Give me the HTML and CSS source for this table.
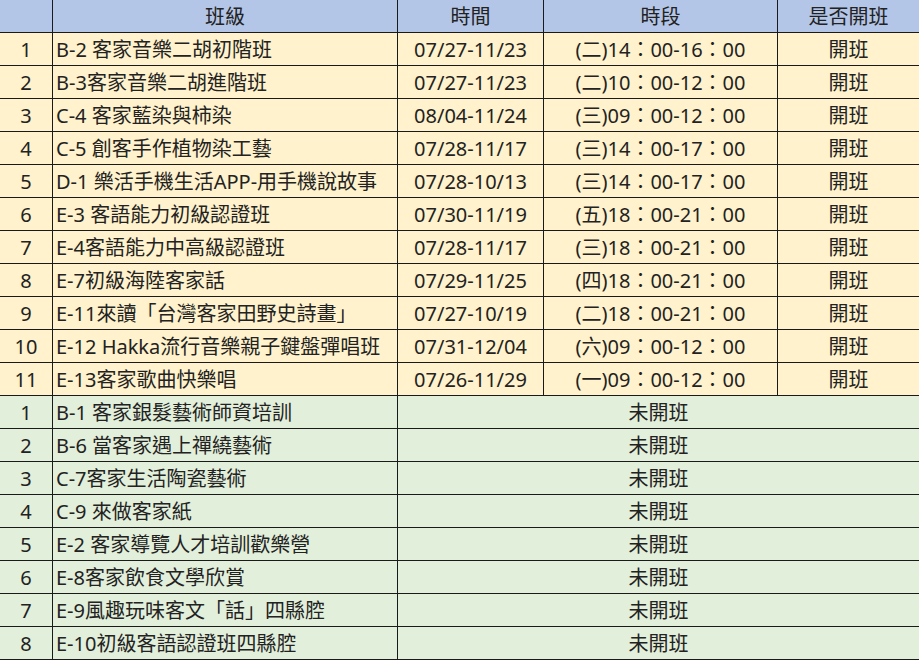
FILE: index.html
```html
<!DOCTYPE html>
<html lang="zh-Hant">
<head>
<meta charset="utf-8">
<title>班級開班一覽</title>
<link rel="stylesheet" href="styles.css">
</head>
<body>
<div class="sheet">
  <div class="c hd"></div><div class="c hd">班級</div><div class="c hd">時間</div><div class="c hd">時段</div><div class="c hd last">是否開班</div>

  <div class="c op">1</div><div class="c op l">B-2 客家音樂二胡初階班</div><div class="c op">07/27-11/23</div><div class="c op">(二)14：00-16：00</div><div class="c op last">開班</div>
  <div class="c op">2</div><div class="c op l">B-3客家音樂二胡進階班</div><div class="c op">07/27-11/23</div><div class="c op">(二)10：00-12：00</div><div class="c op last">開班</div>
  <div class="c op">3</div><div class="c op l">C-4 客家藍染與柿染</div><div class="c op">08/04-11/24</div><div class="c op">(三)09：00-12：00</div><div class="c op last">開班</div>
  <div class="c op">4</div><div class="c op l">C-5 創客手作植物染工藝</div><div class="c op">07/28-11/17</div><div class="c op">(三)14：00-17：00</div><div class="c op last">開班</div>
  <div class="c op">5</div><div class="c op l">D-1 樂活手機生活APP-用手機說故事</div><div class="c op">07/28-10/13</div><div class="c op">(三)14：00-17：00</div><div class="c op last">開班</div>
  <div class="c op">6</div><div class="c op l">E-3 客語能力初級認證班</div><div class="c op">07/30-11/19</div><div class="c op">(五)18：00-21：00</div><div class="c op last">開班</div>
  <div class="c op">7</div><div class="c op l">E-4客語能力中高級認證班</div><div class="c op">07/28-11/17</div><div class="c op">(三)18：00-21：00</div><div class="c op last">開班</div>
  <div class="c op">8</div><div class="c op l">E-7初級海陸客家話</div><div class="c op">07/29-11/25</div><div class="c op">(四)18：00-21：00</div><div class="c op last">開班</div>
  <div class="c op">9</div><div class="c op l">E-11來讀「台灣客家田野史詩畫」</div><div class="c op">07/27-10/19</div><div class="c op">(二)18：00-21：00</div><div class="c op last">開班</div>
  <div class="c op">10</div><div class="c op l">E-12 Hakka流行音樂親子鍵盤彈唱班</div><div class="c op">07/31-12/04</div><div class="c op">(六)09：00-12：00</div><div class="c op last">開班</div>
  <div class="c op">11</div><div class="c op l">E-13客家歌曲快樂唱</div><div class="c op">07/26-11/29</div><div class="c op">(一)09：00-12：00</div><div class="c op last">開班</div>

  <div class="c no">1</div><div class="c no l">B-1 客家銀髮藝術師資培訓</div><div class="c no span last">未開班</div>
  <div class="c no">2</div><div class="c no l">B-6 當客家遇上禪繞藝術</div><div class="c no span last">未開班</div>
  <div class="c no">3</div><div class="c no l">C-7客家生活陶瓷藝術</div><div class="c no span last">未開班</div>
  <div class="c no">4</div><div class="c no l">C-9 來做客家紙</div><div class="c no span last">未開班</div>
  <div class="c no">5</div><div class="c no l">E-2 客家導覽人才培訓歡樂營</div><div class="c no span last">未開班</div>
  <div class="c no">6</div><div class="c no l">E-8客家飲食文學欣賞</div><div class="c no span last">未開班</div>
  <div class="c no">7</div><div class="c no l">E-9風趣玩味客文「話」四縣腔</div><div class="c no span last">未開班</div>
  <div class="c no">8</div><div class="c no l">E-10初級客語認證班四縣腔</div><div class="c no span last">未開班</div>
</div>
</body>
</html>
```

FILE: styles.css
```css
html, body {
  margin: 0;
  padding: 0;
  background: #ffffff;
}

.sheet {
  display: grid;
  grid-template-columns: 53px 345px 146px 234px 141px;
  grid-template-rows: 33px;
  grid-auto-rows: 33px;
  width: 919px;
  font-family: "Noto Sans", "Noto Sans CJK TC", sans-serif;
  font-size: 20px;
  color: #222222;
}

.c {
  box-sizing: border-box;
  border-right: 1px solid #1a1a1a;
  border-bottom: 1px solid #1a1a1a;
  display: flex;
  align-items: center;
  justify-content: center;
  padding-top: 2px;
  white-space: nowrap;
  overflow: hidden;
  line-height: 1;
}

.c.last {
  border-right: none;
}

.hd {
  background: #b4c6e7;
}

.op {
  background: #fff2cc;
}

.no {
  background: #e2efda;
}

.l {
  justify-content: flex-start;
  padding-left: 3px;
}

.span {
  grid-column: span 3;
}
```
